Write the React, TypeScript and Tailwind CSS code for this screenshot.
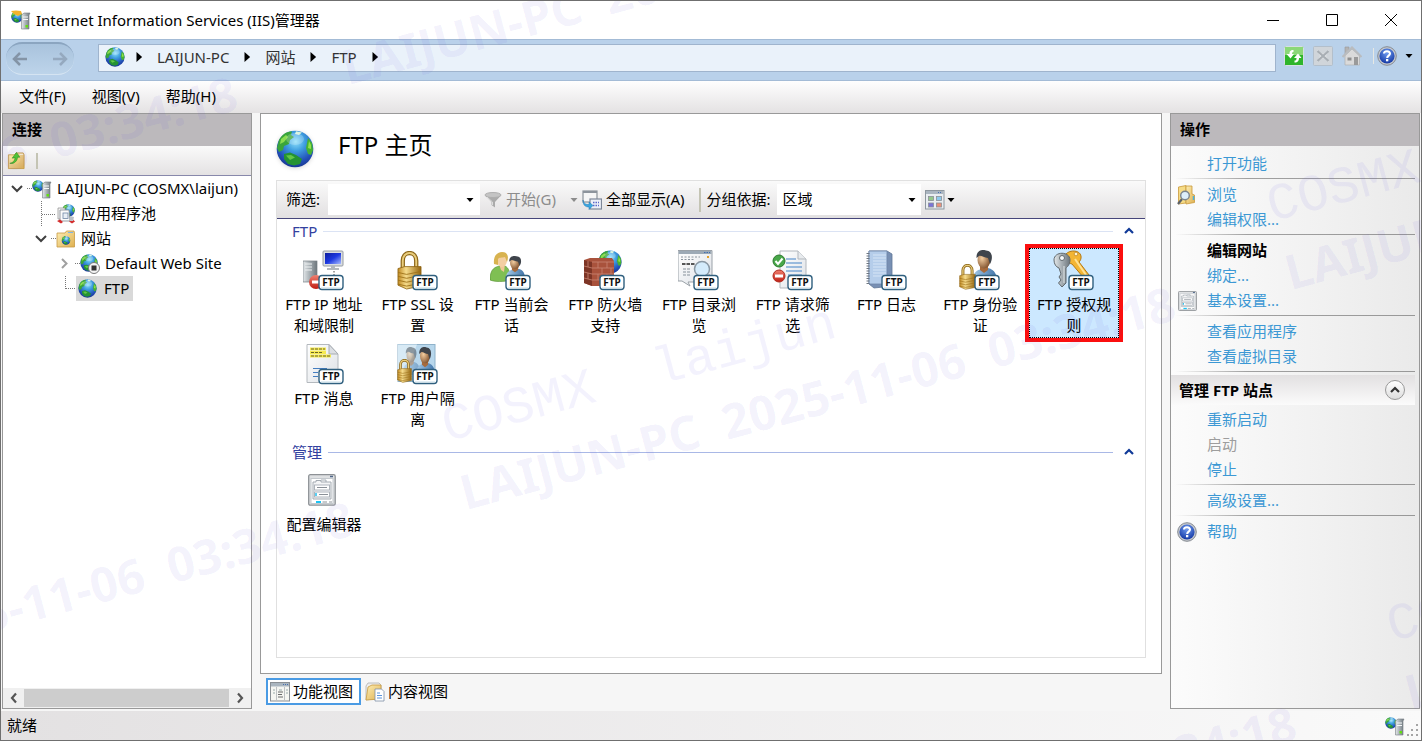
import type { ReactNode } from 'react';

type IconProps = { className?: string };

function Defs() {
  return (
    <svg className="absolute h-0 w-0" aria-hidden="true">
      <defs>
        <radialGradient id="ocean" cx="0.52" cy="0.3" r="0.72">
          <stop offset="0" stopColor="#8fe0fa" />
          <stop offset="0.35" stopColor="#3f9fe0" />
          <stop offset="0.75" stopColor="#2350b8" />
          <stop offset="1" stopColor="#17358f" />
        </radialGradient>
        <linearGradient id="gold" x1="0" x2="1">
          <stop offset="0" stopColor="#c08a24" />
          <stop offset="0.35" stopColor="#f6dc8c" />
          <stop offset="1" stopColor="#96660f" />
        </linearGradient>
        <linearGradient id="steel" x1="0" x2="1">
          <stop offset="0" stopColor="#e4e8ea" />
          <stop offset="0.5" stopColor="#a5adb2" />
          <stop offset="1" stopColor="#6d767c" />
        </linearGradient>
        <linearGradient id="paper" x1="0" y1="0" x2="1" y2="1">
          <stop offset="0" stopColor="#ffffff" />
          <stop offset="1" stopColor="#dde1e6" />
        </linearGradient>
        <linearGradient id="folder" x1="0" y1="0" x2="1" y2="1">
          <stop offset="0" stopColor="#fdeeb4" />
          <stop offset="1" stopColor="#dfb050" />
        </linearGradient>
        <linearGradient id="red" x1="0" y1="0" x2="0" y2="1">
          <stop offset="0" stopColor="#f08070" />
          <stop offset="1" stopColor="#bf1e14" />
        </linearGradient>
        <linearGradient id="screen" x1="0" y1="0" x2="1" y2="1">
          <stop offset="0" stopColor="#0c1c9c" />
          <stop offset="0.5" stopColor="#1c38e0" />
          <stop offset="1" stopColor="#a8bcff" />
        </linearGradient>
        <linearGradient id="shirt" x1="0" x2="1">
          <stop offset="0" stopColor="#a9cdea" />
          <stop offset="1" stopColor="#3f73a8" />
        </linearGradient>
        <radialGradient id="face" cx="0.35" cy="0.4" r="0.7">
          <stop offset="0" stopColor="#f3cda0" />
          <stop offset="1" stopColor="#7b4c28" />
        </radialGradient>
        <radialGradient id="helpBlue" cx="0.5" cy="0.3" r="0.7">
          <stop offset="0" stopColor="#6f9cf0" />
          <stop offset="1" stopColor="#1438a4" />
        </radialGradient>
      </defs>
    </svg>
  );
}

function GlobeShape() {
  return (
    <>
      <circle cx="19" cy="19" r="18.3" fill="url(#ocean)" />
      <path d="M3 10 C6 4 11 1.500 16 1.500 L15 5 L18 7 L14 10 L13 14 L8 16 L7 20 L3 22 L1 18 Z" fill="#3aa53a" />
      <path d="M5 9 L10 5 L12 7 L8 12 L4 14 Z" fill="#8bdc50" />
      <path d="M20 1.200 L26 2.500 L23 5 L19 4 Z" fill="#d9f3dc" />
      <path d="M32 8 L36 13 L37 20 L35 25 L32 24 L30 18 L31 13 Z" fill="#45b232" />
      <path d="M33 11 L35 15 L35 19 L32 18 Z" fill="#93e04e" />
      <path d="M8 24 L14 22.500 L20 25 L26 29 L24 34 L18 35.500 L12 34 L8 29 Z" fill="#259333" />
      <path d="M10 25.500 L15 25 L19 27.500 L14 30 Z" fill="#62c746" />
      <ellipse cx="19" cy="9" rx="9" ry="6" fill="#fff" opacity="0.22" />
    </>
  );
}

function Globe({ className }: IconProps) {
  return (
    <svg className={className} viewBox="0 0 38 38" aria-hidden="true">
      <GlobeShape />
    </svg>
  );
}

function MiniGlobe({ x, y, size }: { x: number; y: number; size: number }) {
  return (
    <svg x={x} y={y} width={size} height={size} viewBox="0 0 38 38">
      <GlobeShape />
    </svg>
  );
}

function ServerGlobe({ className, gold }: IconProps & { gold?: boolean }) {
  return (
    <svg className={className} viewBox="0 0 20 20" aria-hidden="true">
      <MiniGlobe x={0} y={1} size={12} />
      {gold && <path d="M0 1 L5 0.500 L10 1 L11 4 L7 6 L3 4 Z" fill="#f2b32c" />}
      <path d="M10.500 5 L13 3 H19 L18 5 V19 H10.500 Z" fill="url(#steel)" stroke="#737b80" strokeWidth="0.6" />
      <path d="M12 7 H17 M12 9.500 H17" stroke="#f5f7f8" />
      <rect x="14.500" y="15" width="2.500" height="2.500" fill="#62e010" />
    </svg>
  );
}

function FolderUpIcon({ className }: IconProps) {
  return (
    <svg className={className} viewBox="0 0 20 20" aria-hidden="true">
      <path d="M1.500 4 H8 L9.500 2 H17 L18 4 V18.500 H1.500 Z" fill="url(#folder)" stroke="#c0913a" strokeWidth="0.8" />
      <path d="M13 3.500 H17" stroke="#fffbe8" />
      <path d="M3 13 C7 12 8 10 8.500 7 L5.500 7.500 L10 1.500 L13.500 6.500 L11 6.500 C11 10 8 14 3 13 Z" fill="#4fc437" stroke="#258a1c" strokeWidth="0.6" />
    </svg>
  );
}

function AppPoolIcon({ className }: IconProps) {
  return (
    <svg className={className} viewBox="0 0 20 20" aria-hidden="true">
      <MiniGlobe x={6} y={0} size={13} />
      <path d="M2 4 H9 L10 15 H2 Z" fill="#f4f4f4" stroke="#8b8b8b" strokeWidth="0.7" />
      <path d="M4 6 H13 L14 17 H4 Z" fill="#fbfbfb" stroke="#7d868f" strokeWidth="0.8" />
      <rect x="7" y="9" width="5" height="5.500" fill="#e8eef5" stroke="#7087a5" strokeWidth="0.8" />
      <path d="M1 17 L4 15.500 L7 18 L5 19.500 Z M13 17.500 L17 15.500 L19 17.500 L16 19.500 Z" fill="#d32d2d" />
      <path d="M14 12 L18 13 L17 17 H14 Z" fill="#b9c0c8" />
    </svg>
  );
}

function SitesFolderIcon({ className }: IconProps) {
  return (
    <svg className={className} viewBox="0 0 20 20" aria-hidden="true">
      <path d="M1 4 H9 L10.500 2 H18 L18.500 4 V18 H1 Z" fill="url(#folder)" stroke="#c89b45" strokeWidth="0.8" />
      <path d="M12 3.500 H17" stroke="#7fb4e6" />
      <MiniGlobe x={5.5} y={7} size={9} />
    </svg>
  );
}

function StoppedSiteIcon({ className }: IconProps) {
  return (
    <svg className={className} viewBox="0 0 20 20" aria-hidden="true">
      <MiniGlobe x={0} y={0} size={18} />
      <circle cx="14" cy="14" r="5.500" fill="#f4f4f4" stroke="#7a7a7a" />
      <rect x="11.500" y="11.500" width="5" height="5" fill="#333" />
    </svg>
  );
}

function HelpIcon({ className }: IconProps) {
  return (
    <svg className={className} viewBox="0 0 20 20" aria-hidden="true">
      <circle cx="10" cy="10" r="9.300" fill="#c4c8ce" stroke="#858a92" />
      <circle cx="10" cy="10" r="7.600" fill="url(#helpBlue)" />
      <path d="M7 7.600 C7 4.500 13 4.300 13 7.600 C13 9.600 10.200 9.600 10.200 12" fill="none" stroke="#fff" strokeWidth="2.100" />
      <rect x="9" y="13" width="2.300" height="2.300" fill="#fff" />
    </svg>
  );
}

function RefreshIcon() {
  return (
    <svg className="h-5 w-5" viewBox="0 0 20 20" aria-hidden="true">
      <rect x="0.500" y="0.500" width="19" height="19" rx="1" fill="#2fb52b" stroke="#d5dfe4" />
      <rect x="1" y="1" width="18" height="8" fill="#8bd878" />
      <path d="M9.500 4 C6 4 5.500 6 5.500 8 H2.500 L6.500 12.500 L10 8 H8 C8 6.500 8.500 6 9.500 6 Z" fill="#fff" />
      <path d="M10.500 16.500 C14 16.500 15 14.500 15 12 H17.500 L14 7.500 L10 12 H12.500 C12.500 14 12 14.500 10.500 14.500 Z" fill="#fff" />
    </svg>
  );
}

function StopIcon() {
  return (
    <svg className="h-5 w-5" viewBox="0 0 20 20" aria-hidden="true">
      <rect x="0.500" y="0.500" width="19" height="19" rx="1" fill="#d0d5da" stroke="#b3bfcb" />
      <path d="M4 4 L10 8 L16 4 L13 10 L16 16 L10 12 L4 16 L7 10 Z" fill="#e5e8ea" />
      <path d="M4.500 5 L15.500 15 M15.500 5 L4.500 15" stroke="#a8aeb4" strokeWidth="2.200" />
    </svg>
  );
}

function HomeIcon() {
  return (
    <svg className="h-5 w-5" viewBox="0 0 20 20" aria-hidden="true">
      <path d="M3 1 H7 V6 L3 8 Z" fill="#b4b4b4" stroke="#999" strokeWidth="0.600" />
      <path d="M3 9.500 V19 H17.500 V9.500 L10 3 Z" fill="#dadada" stroke="#b0b0b0" strokeWidth="0.700" />
      <path d="M0.500 11 L10 1.500 L19.500 11" fill="none" stroke="#b9bcbf" strokeWidth="2.200" />
      <rect x="5.500" y="11.500" width="4" height="3" fill="#8f8f8f" />
      <rect x="12" y="11" width="4" height="8" fill="#9a9a9a" />
    </svg>
  );
}

function FunnelIcon() {
  return (
    <svg className="h-[18px] w-[18px]" viewBox="0 0 18 18" aria-hidden="true">
      <ellipse cx="9" cy="4" rx="8" ry="2.500" fill="#c4c4c4" stroke="#b0b0b0" />
      <path d="M1 4.500 L7.500 11 V14 L11 16.500 V11 L17 4.500 C14 7 4 7 1 4.500 Z" fill="#ababab" />
      <path d="M3 6 L8.500 11 V14" stroke="#ddd" fill="none" />
    </svg>
  );
}

function ShowAllIcon() {
  return (
    <svg className="h-5 w-5" viewBox="0 0 20 20" aria-hidden="true">
      <rect x="1" y="1" width="14" height="11" fill="#f6f6f6" stroke="#8d949c" strokeWidth="1.200" />
      <rect x="1" y="1" width="14" height="2" fill="#8d949c" />
      <rect x="8" y="9" width="11.500" height="10" fill="#eceff8" stroke="#7e8798" strokeWidth="1.200" />
      <path d="M11 12.500 H17 M11 15.500 H17" stroke="#5b67c8" strokeWidth="1.500" strokeDasharray="1.500 1" />
      <path d="M1 10 C2 14 4 14.500 7 14.500 V12 L11 15.500 L7 19.500 V17 C3 17 1 15 1 10 Z" fill="#3ba6e0" stroke="#1c79b5" strokeWidth="0.500" />
    </svg>
  );
}

function GroupViewIcon() {
  return (
    <svg className="h-5 w-5" viewBox="0 0 20 20" aria-hidden="true">
      <rect x="0.500" y="0.500" width="18.500" height="18.500" fill="#e9edf1" stroke="#8e979f" />
      <rect x="1" y="1" width="17.500" height="3" fill="#aab5c0" />
      <path d="M13 2.500 H17" stroke="#4770b0" strokeDasharray="1 1" />
      <g stroke="#8a8f96" strokeWidth="0.800">
        <rect x="3.500" y="6.500" width="5" height="4" fill="#94c88b" />
        <rect x="11.500" y="6.500" width="5" height="4" fill="#8dc9ec" />
        <rect x="3.500" y="13" width="5" height="4" fill="#7a73d8" />
        <rect x="11.500" y="13" width="5" height="4" fill="#ea9079" />
      </g>
    </svg>
  );
}

function FeatureViewIcon() {
  return (
    <svg className="h-5 w-5" viewBox="0 0 20 20" aria-hidden="true">
      <rect x="0.500" y="0.500" width="19" height="18.500" fill="#f6f6f2" stroke="#8a8f94" />
      <rect x="1" y="1" width="18" height="3.500" fill="#aab5bf" />
      <path d="M13 2.500 H18" stroke="#4770b0" strokeDasharray="1 1" />
      <path d="M6.500 5 V19 M14.500 5 V19" stroke="#bfc2c4" />
      <path d="M3 8 H5 M3 11 H5 M9 8 H12 M16 8 H18 M16 11 H18" stroke="#9aa" />
      <path d="M8 10 H13 M8 12.500 H12 M8 15 H13" stroke="#6a6a6a" />
    </svg>
  );
}

function ContentViewIcon() {
  return (
    <svg className="h-5 w-5" viewBox="0 0 20 20" aria-hidden="true">
      <path d="M1 4 L3 1 H14 L16 3 V16 L1 18 Z" fill="#eee" stroke="#a7a7a7" strokeWidth="0.700" />
      <path d="M3 5 L7 3 H16 V17 L1 18 Z" fill="url(#folder)" stroke="#c99a3c" strokeWidth="0.800" />
      <path d="M10 7 H16.500 L19 9.500 V19 H10 Z" fill="#fff" stroke="#7d8fa6" strokeWidth="0.800" />
      <path d="M12 11 H15 M12 13.500 H17 M12 16 H17" stroke="#5b94dc" />
    </svg>
  );
}

function BrowseIcon() {
  return (
    <svg className="h-5 w-5" viewBox="0 0 20 20" aria-hidden="true">
      <path d="M1.500 2 L9 0.500 V18 L1.500 19 Z" fill="#f6dc86" stroke="#c9993b" strokeWidth="0.800" />
      <path d="M9 1 H15 V9 L17.500 10 V17.500 L9 19 Z" fill="url(#folder)" stroke="#c9993b" strokeWidth="0.800" />
      <path d="M16.500 11 V15" stroke="#48b1e0" strokeWidth="1.500" />
      <path d="M5 14 L1 19" stroke="#5b6168" strokeWidth="2.200" />
      <circle cx="8" cy="10.500" r="4.300" fill="#dceefa" stroke="#7b858e" strokeWidth="1.400" />
    </svg>
  );
}

function SettingsFormIcon({ className }: IconProps) {
  return (
    <svg className={className} viewBox="0 0 28 32" preserveAspectRatio="none" aria-hidden="true">
      <rect x="0.700" y="0.700" width="26.500" height="30.500" rx="1.500" fill="#dfe1e3" stroke="#8e9296" strokeWidth="1.300" />
      <rect x="3" y="4.500" width="22" height="25" fill="#fff" stroke="#c4c9ce" />
      <path d="M22 2.500 H25" stroke="#4d6688" strokeWidth="1.500" />
      <path d="M5 25 V8 H8 V6.500 H13 V8 H23 V25 Z" fill="#f4f5f6" stroke="#a4abb2" />
      <path d="M13 6 H18 V8" fill="none" stroke="#a4abb2" />
      <rect x="6.500" y="11" width="15" height="5" fill="#fff" stroke="#aeb4bb" />
      <rect x="6.500" y="18" width="15" height="5" fill="#fff" stroke="#aeb4bb" />
      <path d="M9 13.500 H19 M11 20.500 H20" stroke="#8a9097" />
      <path d="M8 19 V22" stroke="#20bff0" strokeWidth="1.500" />
      <path d="M8 28 H13" stroke="#1cc3f4" strokeWidth="2" />
      <path d="M14.500 28 H19 M21 28 H24" stroke="#b4b8bc" strokeWidth="1.500" />
    </svg>
  );
}

function FtpIcon({ children }: { children: ReactNode }) {
  return (
    <svg className="h-[42px] w-12" viewBox="0 0 48 42" aria-hidden="true">
      {children}
      <rect x="16" y="25.500" width="24" height="14" rx="3" fill="#fff" stroke="#30607f" strokeWidth="1.400" />
      <path d="M18 38 H38" stroke="#c4dbe6" />
      <text x="28" y="36" textAnchor="middle" fontSize="10" fontWeight="700" fontFamily="Noto Sans, sans-serif" fill="#111">
        FTP
      </text>
    </svg>
  );
}

function Padlock({ x, y, w, h }: { x: number; y: number; w: number; h: number }) {
  return (
    <svg x={x} y={y} width={w} height={h} viewBox="0 0 26 40" preserveAspectRatio="none">
      <path d="M6 20 V10 C6 -0.500 20 -0.500 20 10 V20" fill="none" stroke="#8b6518" strokeWidth="4.500" />
      <path d="M6 20 V10 C6 -0.500 20 -0.500 20 10 V20" fill="none" stroke="#e9cd7c" strokeWidth="2" />
      <path d="M1 18 L8 16 H25 V36 L10 39 L1 35 Z" fill="url(#gold)" stroke="#8a6111" strokeWidth="0.800" />
      <path d="M1 22 L10 24 L25 21 M1 26 L10 28 L25 25 M1 30 L10 32 L25 29 M1 34 L10 36 L25 33" fill="none" stroke="#9c7018" strokeWidth="0.900" />
    </svg>
  );
}

function Man({ x, y, w, h }: { x: number; y: number; w: number; h: number }) {
  return (
    <svg x={x} y={y} width={w} height={h} viewBox="0 0 26 34" preserveAspectRatio="none">
      <path d="M1 34 C1 22 6 20 11 19 L17 18 C24 20 26 24 26 34 Z" fill="url(#shirt)" />
      <path d="M9 15 H17 V20 L13 23 L9 20 Z" fill="#a76b3d" />
      <ellipse cx="13" cy="10" rx="6.500" ry="8.500" fill="url(#face)" />
      <path d="M5.500 8 C5 0 12 -1 15 0.500 C22 1 22 9 19 14 L17 8 C13 8 10 5 8 6 Z" fill="#3f444b" />
    </svg>
  );
}

const ftpArt: Record<string, ReactNode> = {
  ip: (
    <>
      <rect x="0" y="11" width="14" height="21" fill="url(#steel)" stroke="#757e84" strokeWidth="0.700" />
      <path d="M2 14 H9 M2 17 H9 M2 20 H9" stroke="#eef1f2" />
      <rect x="20" y="1" width="20" height="15" rx="1" fill="#d9dde1" stroke="#969ca2" />
      <rect x="22" y="3" width="16" height="11" fill="url(#screen)" />
      <path d="M28 16 H32 V18 H36 V20 H24 V18 H28 Z" fill="#b3b8bd" />
      <path d="M31 21 V25" stroke="#444" strokeDasharray="1.500 1.500" />
      <circle cx="13" cy="32" r="7" fill="url(#red)" />
      <rect x="9" y="30.500" width="8" height="3" fill="#fff" />
    </>
  ),
  ssl: <Padlock x={0} y={1} w={25} h={39} />,
  session: (
    <>
      <path d="M0 30 C0 18 6 17 9 16 H15 C19 18 20 22 20 30 C14 32 5 32 0 30 Z" fill="#7fbf53" stroke="#548f31" strokeWidth="0.600" />
      <path d="M9 14 H15 L14 22 L11 20 Z" fill="#f0c795" />
      <ellipse cx="12" cy="10" rx="5" ry="7" fill="#f3cfa2" />
      <path d="M4 14 C3 5 8 2 12 2 C18 2 19 7 17 12 L15 7 C12 8 9 7 8 9 L8 15 Z" fill="#d8b350" />
      <Man x={15} y={6} w={20} h={24} />
    </>
  ),
  firewall: (
    <>
      <MiniGlobe x={14} y={0} size={24} />
      <path d="M0 10 L6 8 H28 L30 11 V36 H8 L0 33 Z" fill="#a9523c" />
      <path d="M0 10 L8 12 V36 L0 33 Z" fill="#7d3526" />
      <path d="M8 12 H30 M8 18 H30 M8 24 H30 M8 30 H30 M14 12 V18 M23 12 V18 M18 18 V24 M27 18 V24 M14 24 V30 M23 24 V30 M0 16 L8 18 M0 22 L8 24 M0 28 L8 30 M18 30 V36 M4 11 V17 M4 23 V29" stroke="#c98673" strokeWidth="0.800" />
    </>
  ),
  browse: (
    <>
      <path d="M0 0.500 H34 V32 H10 L12 36 L4 31 H0 Z" fill="url(#paper)" stroke="#9aa1a8" />
      <rect x="0.500" y="1" width="33" height="3" fill="#9daab6" />
      <path d="M26 2.500 H32" stroke="#3f6db0" strokeDasharray="1.500 1" />
      <path d="M3 7 H22 M3 9.500 H16" stroke="#8c959e" strokeDasharray="2 1.500" />
      <path d="M4 14 H17" stroke="#222" strokeWidth="1.500" strokeDasharray="3.500 1" />
      <path d="M5 19 H13 M5 22 H13 M5 25 H13" stroke="#87919b" strokeDasharray="3 1" />
      <path d="M30 25 L33 30" stroke="#4e5a64" strokeWidth="3" />
      <circle cx="24" cy="19" r="7.500" fill="#d4ebfb" stroke="#8a98a4" strokeWidth="1.500" />
      <rect x="29" y="6" width="2" height="2" fill="#e3a02c" />
    </>
  ),
  filter: (
    <>
      <path d="M8 1 H26 L34 9 V38 H8 Z" fill="url(#paper)" stroke="#b2b7bd" />
      <path d="M26 1 V9 H34" fill="#e8ebee" stroke="#b2b7bd" />
      <path d="M14 9 H24 M14 13 H30 M14 17 H30 M14 21 H30 M16 25 H30" stroke="#4584c8" strokeWidth="1.200" />
      <circle cx="7" cy="11" r="6" fill="#49a749" stroke="#2b7a2d" />
      <path d="M3.500 11 L6 14 L10.500 8.500" fill="none" stroke="#fff" strokeWidth="2" />
      <circle cx="7" cy="26" r="6" fill="url(#red)" stroke="#b12a1d" />
      <rect x="3" y="24.500" width="8" height="3" fill="#fff" />
    </>
  ),
  log: (
    <>
      <path d="M3 1 H21 L26 4 V36 L8 38 L3 34 Z" fill="#7890b4" stroke="#5f7697" strokeWidth="0.800" />
      <path d="M3 1 H21 V34 H3 Z" fill="#b5cdea" stroke="#6f86a8" strokeWidth="0.800" />
      <path d="M7 5 H20 M7 8 H20 M7 11 H20 M7 14 H20 M7 17 H20 M7 20 H20 M7 23 H20 M7 26 H20" stroke="#d6e5f6" />
      <path d="M2 3 V34" stroke="#6b7580" strokeWidth="3" strokeDasharray="1 1.500" />
    </>
  ),
  auth: (
    <>
      <Man x={12} y={0} w={26} h={34} />
      <Padlock x={0} y={14} w={17} h={26} />
    </>
  ),
  authorize: (
    <>
      <path
        d="M13 4 C17 -0.500 27 0 28 6 C28.500 9 27 11 26 12 L36 25 L30 27 L19 14 C14 13 12 8 13 4 Z"
        fill="#f3b534"
        stroke="#b57915"
      />
      <path d="M22 9 L33 25" stroke="#ffe193" strokeWidth="2" />
      <circle cx="23" cy="4" r="1.800" fill="#fff4d0" stroke="#b57915" strokeWidth="0.600" />
      <path d="M1 10 C1 1 17 1 17 10 C17 15 14 17 13 18 V33 L9 37 L5.500 33 L8 30 L6 27 L8 24 L6 18 C3 17 1 14 1 10 Z" fill="url(#steel)" stroke="#61696e" />
      <circle cx="9" cy="8" r="2.500" fill="#f7f9fa" stroke="#61696e" />
      <path d="M11 16 V33" stroke="#e4e9eb" />
    </>
  ),
  message: (
    <>
      <path d="M4 0.500 H26 L35 10 V38.500 H4 Z" fill="url(#paper)" stroke="#b4b9be" />
      <path d="M26 0.500 V10 H35 Z" fill="#dcdfe3" stroke="#a8adb3" />
      <path d="M7 5 H23 M7 8.500 H23 M7 12 H28" stroke="#f6ea50" strokeWidth="3" />
      <path d="M8 5 H22 M8 8.500 H20 M8 12 H27" stroke="#6b6428" strokeDasharray="3 1" />
      <path d="M10 24.500 H24 M10 28.500 H15 M10 32.500 H15" stroke="#447dc0" />
    </>
  ),
  isolation: (
    <>
      <rect x="1" y="0.500" width="37" height="37" fill="#b8d7ec" stroke="#8fb2ca" />
      <path d="M1 0.500 H20 L5 37 H1 Z" fill="#d8eaf5" />
      <g opacity="0.500">
        <Man x={5} y={3} w={18} h={28} />
      </g>
      <Man x={18} y={3} w={20} h={30} />
      <Padlock x={0} y={15} w={15} h={24} />
    </>
  ),
};

const ftpFeatures = [
  { id: 'ip', label: 'FTP IP 地址\n和域限制' },
  { id: 'ssl', label: 'FTP SSL 设\n置' },
  { id: 'session', label: 'FTP 当前会\n话' },
  { id: 'firewall', label: 'FTP 防火墙\n支持' },
  { id: 'browse', label: 'FTP 目录浏\n览' },
  { id: 'filter', label: 'FTP 请求筛\n选' },
  { id: 'log', label: 'FTP 日志' },
  { id: 'auth', label: 'FTP 身份验\n证' },
  { id: 'authorize', label: 'FTP 授权规\n则', selected: true },
  { id: 'message', label: 'FTP 消息' },
  { id: 'isolation', label: 'FTP 用户隔\n离' },
];

// x and y give the foot of the machine line, the user line sits above it
const stamps = [
  { x: 466, y: 515, user: true },
  { x: 1291, y: 295, user: true },
  { x: 348, y: 90, user: false },
  { x: 1411, y: 715, user: true },
  { x: -355, y: 730, user: false },
  { x: -472, y: 305, user: false },
  { x: 587, y: 935, user: false },
];

function Watermark() {
  return (
    <div className="pointer-events-none absolute inset-0 overflow-hidden" aria-hidden="true">
      {stamps.map((s) => (
        <div key={`${s.x},${s.y}`} className="absolute h-0 w-0" style={{ left: s.x, top: s.y }}>
          <div className="absolute bottom-0 left-0 origin-bottom-left -rotate-15 leading-none whitespace-pre text-[#5a46dc]/7">
            {s.user && <div className="mb-4 font-['Liberation_Mono',monospace] text-[52px] leading-none">COSMX  laijun</div>}
            <div className="text-5xl leading-none font-bold">LAIJUN-PC  2025-11-06  03:34:18</div>
          </div>
        </div>
      ))}
    </div>
  );
}

function Triangle({ className, right }: IconProps & { right?: boolean }) {
  return (
    <svg className={className} viewBox="0 0 8 8" fill="currentColor" aria-hidden="true">
      {right ? <path d="M2 0 L6.500 4 L2 8 Z" /> : <path d="M0.500 2 H7.500 L4 6 Z" />}
    </svg>
  );
}

function Chevron({ className, d }: { className?: string; d: string }) {
  return (
    <svg className={className} viewBox="0 0 12 12" fill="none" stroke="currentColor" strokeWidth="2.200" aria-hidden="true">
      <path d={d} />
    </svg>
  );
}

const UP = 'M2 8 L6 4 L10 8';
const LEFT = 'M8 1.500 L4 6 L8 10.500';
const RIGHT = 'M4 1.500 L8 6 L4 10.500';

function TreeSlot({ kind }: { kind: 'open' | 'closed' | 'leaf' | 'last' }) {
  return (
    <svg className="h-[25px] w-6 shrink-0" viewBox="0 0 24 25" fill="none" aria-hidden="true">
      {kind === 'leaf' && <path d="M9.500 0 V25 M10 13.500 H24" stroke="#777" strokeDasharray="1 1" />}
      {kind === 'last' && <path d="M9.500 0 V13 M10 12.500 H22" stroke="#777" strokeDasharray="1 1" />}
      {kind === 'open' && <path d="M4 10 L9 15 L14 10" stroke="#404040" strokeWidth="2" />}
      {kind === 'closed' && <path d="M6 8 L10.500 12.500 L6 17" stroke="#a0a0a0" strokeWidth="2" />}
      {(kind === 'open' || kind === 'closed') && <path d="M19 12.500 H24" stroke="#777" strokeDasharray="1 1" />}
    </svg>
  );
}

function PanelTitle({ children }: { children: ReactNode }) {
  return <h2 className="h-8 bg-[#bcb9bc] px-[9px] text-[15px] leading-[30px] font-bold">{children}</h2>;
}

function GroupTitle({ children, line }: { children: ReactNode; line: string }) {
  return (
    <div className="flex h-6 items-center gap-1.5 pr-1.5 pl-[15px]">
      <h3 className="text-[#33419f]">{children}</h3>
      <div className={`h-px flex-1 ${line}`} />
      <button className="p-1" aria-label="折叠">
        <Chevron className="h-3 w-3 text-[#103a98]" d={UP} />
      </button>
    </div>
  );
}

function ActionRow({ children, icon, disabled }: { children: ReactNode; icon?: ReactNode; disabled?: boolean }) {
  return (
    <li className="flex h-[25px] items-center gap-2.5 pl-1.5">
      <span className="flex w-5 justify-center">{icon}</span>
      {disabled ? <span className="text-[#9d9d9d]">{children}</span> : <a href="#" className="text-[#3c98d4]">{children}</a>}
    </li>
  );
}

function Rule() {
  return <li className="mt-0.5 mr-1 mb-[3px] ml-1 h-px bg-linear-to-r from-transparent via-[#a0a0a0] via-30% to-[#989898]" />;
}

function ToolSeparator() {
  return <div className="h-6 w-0.5 bg-[#c4c4b4]" />;
}

export default function App() {
  return (
    <div className="relative flex min-h-screen flex-col overflow-hidden border border-[#6f6f6f] bg-[#f6f6f6] font-['Noto_Sans','Noto_Sans_CJK_SC',sans-serif] text-[15px] leading-[21px] text-black">
      <Defs />

      <header className="flex h-[38px] items-center bg-white pl-2.5">
        <ServerGlobe className="h-5 w-5" gold />
        <h1 className="ml-[5px] flex-1">Internet Information Services (IIS)管理器</h1>
        <div className="flex h-full pr-px">
          {['M0 6.500 H12', 'M0.500 0.500 H11.500 V11.500 H0.500 Z', 'M0 0 L12 12 M12 0 L0 12'].map((d, i) => (
            <button key={d} className="flex h-full w-[59px] items-center justify-center" aria-label={['最小化', '最大化', '关闭'][i]}>
              <svg className="h-3 w-3" viewBox="0 0 12 12" fill="none" stroke="#000">
                <path d={d} />
              </svg>
            </button>
          ))}
        </div>
      </header>

      <nav className="flex h-[42px] items-start border-y border-[#a3bbd6] bg-[#b9d1ea] pl-[5px]">
        <div className="mt-0.5 flex h-[33px] w-[68px] items-center justify-between rounded-2xl border-t-2 border-b border-t-[#8ba5c0] border-b-[#d5e4f2] bg-linear-to-b from-[#a9c3dd] to-[#bdd4ea] px-1.5 text-[#8494a6]">
          <button aria-label="后退">
            <svg className="h-4 w-4" viewBox="0 0 16 16" fill="none" stroke="currentColor" strokeWidth="2.500">
              <path d="M15 8 H2 M8 2 L2 8 L8 14" />
            </svg>
          </button>
          <button aria-label="前进" className="text-[#95a9bf]">
            <svg className="h-4 w-4" viewBox="0 0 16 16" fill="none" stroke="currentColor" strokeWidth="2.500">
              <path d="M1 8 H14 M8 2 L14 8 L8 14" />
            </svg>
          </button>
        </div>
        <div className="mt-1 ml-6 flex h-7 flex-1 items-center gap-[13px] border border-[#9fb4cd] bg-[#eaf2fa] pb-0.5 pl-1.5 text-[#333]">
          <Globe className="h-5 w-5" />
          <Triangle right className="-ml-1 h-2.5 w-2.5 text-black" />
          <a href="#">LAIJUN-PC</a>
          <Triangle right className="h-2.5 w-2.5 text-black" />
          <a href="#">网站</a>
          <Triangle right className="h-2.5 w-2.5 text-black" />
          <a href="#">FTP</a>
          <Triangle right className="h-2.5 w-2.5 text-black" />
        </div>
        <div className="mt-1.5 flex items-center gap-[9px] pr-2 pl-2">
          <button aria-label="刷新"><RefreshIcon /></button>
          <button aria-label="停止"><StopIcon /></button>
          <button aria-label="主页"><HomeIcon /></button>
          <div className="ml-0.5 h-4 w-px bg-[#e6e8e4]" />
          <button aria-label="帮助" className="-ml-1.5 flex items-center gap-2">
            <HelpIcon className="h-5 w-5" />
            <Triangle className="h-2 w-2" />
          </button>
        </div>
      </nav>

      <div className="flex h-8 items-center gap-[26px] bg-linear-to-b from-[#fefefe] to-[#e4e2e3] pb-0.5 pl-[18px]">
        <button>文件(F)</button>
        <button>视图(V)</button>
        <button>帮助(H)</button>
      </div>

      <main className="flex flex-1 gap-2 pr-px pl-px">
        <aside className="flex w-[250px] shrink-0 flex-col border border-[#999] bg-white">
          <PanelTitle>连接</PanelTitle>
          <div className="flex h-[30px] items-center gap-2.5 border-b border-[#8888ab] bg-linear-to-b from-[#fafafa] to-[#e4e2e3] pl-1">
            <button aria-label="向上"><FolderUpIcon className="h-[19px] w-[19px]" /></button>
            <div className="h-4 w-0.5 bg-[#c4c4b4]" />
          </div>
          <ul className="flex-1 overflow-hidden pl-[5px] leading-[25px] whitespace-nowrap">
            <li className="flex items-center">
              <TreeSlot kind="open" />
              <ServerGlobe className="mr-[5px] h-5 w-5 shrink-0" />
              LAIJUN-PC (COSMX\laijun)
            </li>
            <li className="flex items-center pl-6">
              <TreeSlot kind="leaf" />
              <AppPoolIcon className="mr-[5px] h-5 w-5 shrink-0" />
              应用程序池
            </li>
            <li className="flex items-center pl-6">
              <TreeSlot kind="open" />
              <SitesFolderIcon className="mr-[5px] h-5 w-5 shrink-0" />
              网站
            </li>
            <li className="flex items-center pl-12">
              <TreeSlot kind="closed" />
              <StoppedSiteIcon className="mr-[5px] h-5 w-5 shrink-0" />
              Default Web Site
            </li>
            <li className="flex items-center pl-12">
              <TreeSlot kind="last" />
              <span className="-ml-1 flex items-center gap-[7px] bg-[#d9d9d9] pr-1 pl-0.5">
                <Globe className="h-[19px] w-[19px]" />
                FTP
              </span>
            </li>
          </ul>
          <div className="flex h-5 items-center bg-[#f0f0f0] text-[#555]">
            <button aria-label="向左滚动" className="flex w-[21px] justify-center"><Chevron className="h-3 w-3" d={LEFT} /></button>
            <div className="h-[18px] flex-1 bg-[#cdcdcd]" />
            <button aria-label="向右滚动" className="flex w-[22px] justify-center"><Chevron className="h-3 w-3" d={RIGHT} /></button>
          </div>
        </aside>

        <section className="flex min-w-0 flex-1 flex-col">
          <div className="flex flex-1 flex-col border border-[#999] bg-white px-[15px] pt-3.5 pb-[15px]">
            <div className="flex h-[52px] items-start gap-6">
              <Globe className="mt-0.5 h-[38px] w-[38px] drop-shadow-sm" />
              <h2 className="text-2xl leading-[34px]">FTP 主页</h2>
            </div>

            <div className="flex flex-1 flex-col border border-[#e0e0e0]">
              <div className="flex h-[38px] items-center border-b border-[#45457a] bg-linear-to-b from-[#fafafa] to-[#e2e0e1] pl-[9px] whitespace-nowrap">
                <label htmlFor="filter">筛选:</label>
                <div className="ml-2 flex h-[31px] w-[152px] items-center bg-white">
                  <input id="filter" className="h-full w-[138px] px-1.5 outline-none" />
                  <Triangle className="h-2 w-2" />
                </div>
                <button disabled className="ml-1 flex items-center gap-1 text-[#8c8c8c]">
                  <FunnelIcon />
                  开始(G)
                  <Triangle className="ml-2.5 h-2 w-2" />
                </button>
                <button className="mr-3.5 ml-1 flex items-center gap-1">
                  <ShowAllIcon />
                  全部显示(A)
                </button>
                <ToolSeparator />
                <label htmlFor="group" className="ml-1.5">分组依据:</label>
                <div className="ml-1.5 flex h-[31px] w-36 items-center bg-white">
                  <select id="group" className="h-full w-[131px] appearance-none px-1.5 outline-none">
                    <option>区域</option>
                  </select>
                  <Triangle className="h-2 w-2" />
                </div>
                <button aria-label="视图" className="ml-1 flex items-center gap-0.5">
                  <GroupViewIcon />
                  <Triangle className="h-2 w-2" />
                </button>
              </div>

              <div>
                <GroupTitle line="bg-[#dbe3f4]">FTP</GroupTitle>
                <div className="mt-[3px] grid w-[844px] grid-cols-9">
                  {ftpFeatures.map((f) => (
                    <button
                      key={f.id}
                      className={
                        f.selected
                          ? 'relative flex h-[94px] flex-col items-center bg-[#cce8ff] pt-1 whitespace-pre outline-4 -outline-offset-2 outline-[#fb0f0f]'
                          : 'flex h-[94px] flex-col items-center pt-1 whitespace-pre'
                      }
                    >
                      {f.selected && <span className="absolute inset-0.5 border border-dotted border-black" />}
                      <span className="pl-1.5">
                        <FtpIcon>{ftpArt[f.id]}</FtpIcon>
                      </span>
                      <span className="mt-0.5">{f.label}</span>
                    </button>
                  ))}
                </div>
              </div>

              <div className="mt-1.5">
                <GroupTitle line="bg-[#a9b8e6]">管理</GroupTitle>
                <button className="flex w-[94px] flex-col items-center pt-2.5">
                  <SettingsFormIcon className="mr-1 h-8 w-7" />
                  <span className="mt-2">配置编辑器</span>
                </button>
              </div>
            </div>
          </div>

          <div className="flex h-[35px] items-start gap-1 pt-1 pl-1.5">
            <button className="flex h-[27px] items-center gap-[3px] border-2 border-[#4a9be4] bg-white pr-1.5 pl-0.5">
              <FeatureViewIcon />
              功能视图
            </button>
            <button className="flex h-[27px] items-center gap-[3px]">
              <ContentViewIcon />
              内容视图
            </button>
          </div>
        </section>

        <aside className="w-[250px] shrink-0 border border-[#999] bg-linear-to-r from-[#fcfcfc] to-[#eaeaea]">
          <PanelTitle>操作</PanelTitle>
          <ul className="pt-[5px]">
            <ActionRow>打开功能</ActionRow>
            <Rule />
            <ActionRow icon={<BrowseIcon />}>浏览</ActionRow>
            <ActionRow>编辑权限...</ActionRow>
            <Rule />
            <li className="h-[25px] pl-9 leading-[25px] font-bold">编辑网站</li>
            <ActionRow>绑定...</ActionRow>
            <ActionRow icon={<SettingsFormIcon className="h-5 w-[19px]" />}>基本设置...</ActionRow>
            <Rule />
            <ActionRow>查看应用程序</ActionRow>
            <ActionRow>查看虚拟目录</ActionRow>
            <Rule />
          </ul>
          <div className="mr-1 mb-0.5 flex h-[30px] items-center justify-between bg-linear-to-b from-[#e2e0e1] to-[#fbfbfb] pr-2.5 pl-2">
            <h3 className="font-bold">管理 FTP 站点</h3>
            <button aria-label="折叠" className="flex h-5 w-5 items-center justify-center rounded-full border border-[#999] bg-linear-to-b from-white to-[#ddd]">
              <Chevron className="h-3 w-3 text-[#333]" d={UP} />
            </button>
          </div>
          <ul>
            <ActionRow>重新启动</ActionRow>
            <ActionRow disabled>启动</ActionRow>
            <ActionRow>停止</ActionRow>
            <Rule />
            <ActionRow>高级设置...</ActionRow>
            <Rule />
            <ActionRow icon={<HelpIcon className="h-5 w-5" />}>帮助</ActionRow>
          </ul>
        </aside>
      </main>

      <footer className="mt-0.5 flex h-[29px] items-center justify-between bg-linear-to-r from-[#e3e1e2] to-[#fafafa] pr-0.5 pl-1.5">
        <span>就绪</span>
        <div className="flex items-end gap-0.5">
          <ServerGlobe className="h-5 w-5" />
          <svg className="h-3 w-3" viewBox="0 0 12 12" fill="#a5a5a5" aria-hidden="true">
            <path d="M9 0 h2 v2 h-2 Z M4 5 h2 v2 h-2 Z M9 5 h2 v2 h-2 Z M0 10 h2 v2 h-2 Z M4 10 h2 v2 h-2 Z M9 10 h2 v2 h-2 Z" />
          </svg>
        </div>
      </footer>

      <Watermark />
    </div>
  );
}
